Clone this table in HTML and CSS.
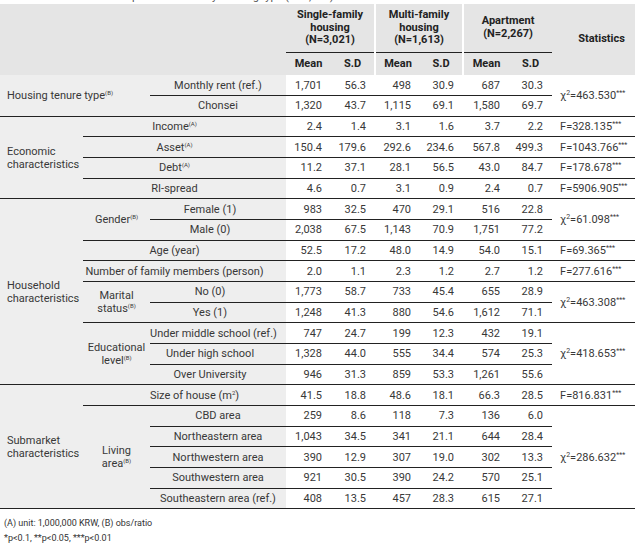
FILE: index.html
```html
<!DOCTYPE html>
<html>
<head>
<meta charset="utf-8">
<link rel="stylesheet" href="styles.css">
</head>
<body>
<div class="cap-clip"><div class="cap">Table 3. Descriptive statistics by housing type (N=6,901)</div></div>
<table class="t">
<colgroup>
<col class="w83"><col class="w67"><col class="w136"><col class="w45"><col class="w44"><col class="w45"><col class="w43"><col class="w46"><col class="w43"><col class="w83">
</colgroup>
<thead>
<tr class="h1">
<th colspan="3" rowspan="2"></th>
<th colspan="2" class="grp">Single-family<br>housing<br>(N=3,021)</th>
<th colspan="2" class="grp sep">Multi-family<br>housing<br>(N=1,613)</th>
<th colspan="2" class="grp sep">Apartment<br>(N=2,267)</th>
<th rowspan="2" class="sth">Statistics</th>
</tr>
<tr class="h2">
<th>Mean</th><th>S.D</th><th class="sep">Mean</th><th>S.D</th><th class="sep">Mean</th><th>S.D</th>
</tr>
</thead>
<tbody>
<tr>
<td colspan="2" rowspan="2" class="cat">Housing tenure type<sup>(B)</sup></td>
<td class="lbl">Monthly rent (ref.)</td>
<td class="n">1,701</td><td class="n">56.3</td><td class="n">498</td><td class="n">30.9</td><td class="n">687</td><td class="n">30.3</td>
<td rowspan="2" class="st">χ<sup>2</sup>=463.530<sup>***</sup></td>
</tr>
<tr>
<td class="lbl">Chonsei</td>
<td class="n">1,320</td><td class="n">43.7</td><td class="n">1,115</td><td class="n">69.1</td><td class="n">1,580</td><td class="n">69.7</td>
</tr>

<tr>
<td rowspan="4" class="cat">Economic<br>characteristics</td>
<td colspan="2" class="lbl wide">Income<sup>(A)</sup></td>
<td class="n">2.4</td><td class="n">1.4</td><td class="n">3.1</td><td class="n">1.6</td><td class="n">3.7</td><td class="n">2.2</td>
<td class="st">F=328.135<sup>***</sup></td>
</tr>
<tr>
<td colspan="2" class="lbl wide">Asset<sup>(A)</sup></td>
<td class="n">150.4</td><td class="n">179.6</td><td class="n">292.6</td><td class="n">234.6</td><td class="n">567.8</td><td class="n">499.3</td>
<td class="st">F=1043.766<sup>***</sup></td>
</tr>
<tr>
<td colspan="2" class="lbl wide">Debt<sup>(A)</sup></td>
<td class="n">11.2</td><td class="n">37.1</td><td class="n">28.1</td><td class="n">56.5</td><td class="n">43.0</td><td class="n">84.7</td>
<td class="st">F=178.678<sup>***</sup></td>
</tr>
<tr>
<td colspan="2" class="lbl wide">RI-spread</td>
<td class="n">4.6</td><td class="n">0.7</td><td class="n">3.1</td><td class="n">0.9</td><td class="n">2.4</td><td class="n">0.7</td>
<td class="st">F=5906.905<sup>***</sup></td>
</tr>

<tr>
<td rowspan="9" class="cat">Household<br>characteristics</td>
<td rowspan="2" class="sub">Gender<sup>(B)</sup></td>
<td class="lbl hh">Female (1)</td>
<td class="n">983</td><td class="n">32.5</td><td class="n">470</td><td class="n">29.1</td><td class="n">516</td><td class="n">22.8</td>
<td rowspan="2" class="st">χ<sup>2</sup>=61.098<sup>***</sup></td>
</tr>
<tr>
<td class="lbl hh">Male (0)</td>
<td class="n">2,038</td><td class="n">67.5</td><td class="n">1,143</td><td class="n">70.9</td><td class="n">1,751</td><td class="n">77.2</td>
</tr>
<tr>
<td colspan="2" class="lbl wide">Age (year)</td>
<td class="n">52.5</td><td class="n">17.2</td><td class="n">48.0</td><td class="n">14.9</td><td class="n">54.0</td><td class="n">15.1</td>
<td class="st">F=69.365<sup>***</sup></td>
</tr>
<tr>
<td colspan="2" class="lbl wide">Number of family members (person)</td>
<td class="n">2.0</td><td class="n">1.1</td><td class="n">2.3</td><td class="n">1.2</td><td class="n">2.7</td><td class="n">1.2</td>
<td class="st">F=277.616<sup>***</sup></td>
</tr>
<tr>
<td rowspan="2" class="sub">Marital<br>status<sup>(B)</sup></td>
<td class="lbl hh">No (0)</td>
<td class="n">1,773</td><td class="n">58.7</td><td class="n">733</td><td class="n">45.4</td><td class="n">655</td><td class="n">28.9</td>
<td rowspan="2" class="st">χ<sup>2</sup>=463.308<sup>***</sup></td>
</tr>
<tr>
<td class="lbl hh">Yes (1)</td>
<td class="n">1,248</td><td class="n">41.3</td><td class="n">880</td><td class="n">54.6</td><td class="n">1,612</td><td class="n">71.1</td>
</tr>
<tr>
<td rowspan="3" class="sub">Educational<br>level<sup>(B)</sup></td>
<td class="lbl hh">Under middle school (ref.)</td>
<td class="n">747</td><td class="n">24.7</td><td class="n">199</td><td class="n">12.3</td><td class="n">432</td><td class="n">19.1</td>
<td rowspan="3" class="st">χ<sup>2</sup>=418.653<sup>***</sup></td>
</tr>
<tr>
<td class="lbl hh">Under high school</td>
<td class="n">1,328</td><td class="n">44.0</td><td class="n">555</td><td class="n">34.4</td><td class="n">574</td><td class="n">25.3</td>
</tr>
<tr>
<td class="lbl hh">Over University</td>
<td class="n">946</td><td class="n">31.3</td><td class="n">859</td><td class="n">53.3</td><td class="n">1,261</td><td class="n">55.6</td>
</tr>

<tr>
<td rowspan="6" class="cat">Submarket<br>characteristics</td>
<td colspan="2" class="lbl size">Size of house (m<sup>2</sup>)</td>
<td class="n">41.5</td><td class="n">18.8</td><td class="n">48.6</td><td class="n">18.1</td><td class="n">66.3</td><td class="n">28.5</td>
<td class="st">F=816.831<sup>***</sup></td>
</tr>
<tr>
<td rowspan="5" class="sub">Living<br>area<sup>(B)</sup></td>
<td class="lbl">CBD area</td>
<td class="n">259</td><td class="n">8.6</td><td class="n">118</td><td class="n">7.3</td><td class="n">136</td><td class="n">6.0</td>
<td rowspan="5" class="st">χ<sup>2</sup>=286.632<sup>***</sup></td>
</tr>
<tr>
<td class="lbl">Northeastern area</td>
<td class="n">1,043</td><td class="n">34.5</td><td class="n">341</td><td class="n">21.1</td><td class="n">644</td><td class="n">28.4</td>
</tr>
<tr>
<td class="lbl">Northwestern area</td>
<td class="n">390</td><td class="n">12.9</td><td class="n">307</td><td class="n">19.0</td><td class="n">302</td><td class="n">13.3</td>
</tr>
<tr>
<td class="lbl">Southwestern area</td>
<td class="n">921</td><td class="n">30.5</td><td class="n">390</td><td class="n">24.2</td><td class="n">570</td><td class="n">25.1</td>
</tr>
<tr>
<td class="lbl">Southeastern area (ref.)</td>
<td class="n">408</td><td class="n">13.5</td><td class="n">457</td><td class="n">28.3</td><td class="n">615</td><td class="n">27.1</td>
</tr>
</tbody>
</table>
<div class="notes">
<div>(A) unit: 1,000,000 KRW, (B) obs/ratio</div>
<div>*p&lt;0.1, **p&lt;0.05, ***p&lt;0.01</div>
</div>
</body>
</html>
```

FILE: styles.css
```css
html, body {
  margin: 0;
  padding: 0;
  background: #ffffff;
}
body {
  font-family: Roboto, "Liberation Sans", sans-serif;
  color: #383838;
  width: 640px;
}
.cap-clip {
  height: 4px;
  overflow: hidden;
}
.cap {
  font-size: 11px;
  line-height: 13px;
  margin-top: -10px;
  padding-left: 60px;
  color: #555555;
}
.t {
  border-collapse: collapse;
  table-layout: fixed;
  width: 635px;
  font-size: 11px;
}
.w83 { width: 83px; }
.w67 { width: 67px; }
.w136 { width: 136px; }
.w45 { width: 45px; }
.w44 { width: 44px; }
.w43 { width: 43px; }
.w46 { width: 46px; }
th {
  background: #e5e5e5;
  color: #222222;
  font-weight: bold;
  font-size: 11px;
  line-height: 12.5px;
  padding: 0;
  text-align: center;
  vertical-align: middle;
}
.h1 { height: 48px; }
.h2 { height: 23px; }
.grp { border-bottom: 1px solid #222222; }
.sep { border-left: 2px solid #ffffff; }
.sth { padding-left: 16px; }
tbody tr { height: 20.67px; }
td {
  padding: 0;
  border-bottom: 1px solid #222222;
  line-height: 13px;
  white-space: nowrap;
  vertical-align: middle;
}
sup {
  font-size: 6px;
  line-height: 0;
  vertical-align: 4px;
}
.cat {
  background: #eeeeee;
  padding-left: 7px;
  text-align: left;
}
.sub {
  background: #eeeeee;
  text-align: center;
}
.lbl {
  background: #eeeeee;
  text-align: center;
}
.lbl.wide { padding-right: 20px; }
.lbl.hh { padding-right: 16px; }
.lbl.size { padding-left: 20px; }
.n {
  text-align: right;
  padding-right: 9px;
  background: #ffffff;
}
.st {
  text-align: left;
  padding-left: 8px;
  background: #ffffff;
}
.st sup { font-size: 7px; }
.notes {
  margin-top: 7px;
  padding-left: 4px;
  font-size: 9px;
  line-height: 15px;
  color: #333333;
}
```
